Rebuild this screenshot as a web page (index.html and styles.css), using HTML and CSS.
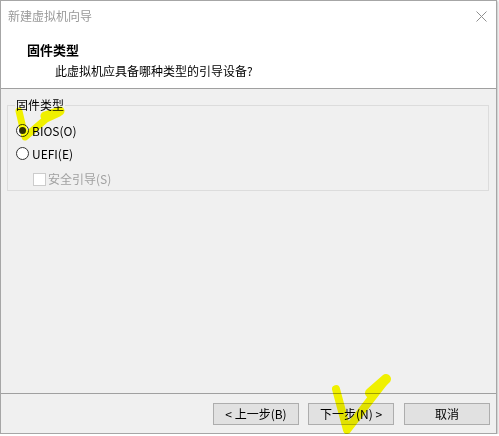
FILE: index.html
```html
<!DOCTYPE html>
<html lang="zh-CN">
<head>
<meta charset="utf-8">
<link rel="stylesheet" href="styles.css">
</head>
<body>
<div class="window">
  <div class="top">
    <div class="titlebar">
      <span class="title">新建虚拟机向导</span>
      <svg class="close" width="11" height="11" viewBox="0 0 11 11"><path d="M0.5 0.5 L10.5 10.5 M10.5 0.5 L0.5 10.5" stroke="#8f8f8f" stroke-width="1" fill="none"/></svg>
    </div>
    <div class="header">
      <div class="h-title">固件类型</div>
      <div class="h-sub">此虚拟机应具备哪种类型的引导设备?</div>
    </div>
  </div>
  <div class="content">
    <div class="group">
      <div class="legend">固件类型</div>
      <div class="row r-bios">
        <span class="radio"><span class="dot"></span></span>
        <span class="lbl">BIOS(O)</span>
      </div>
      <div class="row r-uefi">
        <span class="radio"></span>
        <span class="lbl">UEFI(E)</span>
      </div>
      <div class="row r-check">
        <span class="check"></span>
        <span class="lbl disabled">安全引导(S)</span>
      </div>
    </div>
  </div>
  <div class="footer">
    <button class="btn">&lt; 上一步(B)</button>
    <button class="btn">下一步(N) &gt;</button>
    <button class="btn">取消</button>
  </div>
  <svg class="mark mark1" width="80" height="60" viewBox="0 0 80 60">
    <path d="M19 111 L25 137 L46 119 L59 113" transform="translate(0,-90)" stroke="#ffff00" stroke-width="7" stroke-linecap="round" stroke-linejoin="round" fill="none"/>
    <path d="M45 116 L60 111" transform="translate(0,-90)" stroke="#ffff00" stroke-width="9" stroke-linecap="round" fill="none"/>
  </svg>
  <svg class="mark mark2" width="80" height="64" viewBox="0 0 80 64">
    <path d="M336 389 L347 430 L384 382" transform="translate(-320,-372)" stroke="#ffff00" stroke-width="8" stroke-linecap="round" stroke-linejoin="round" fill="none"/>
    <path d="M370 393 L386 379" transform="translate(-320,-372)" stroke="#ffff00" stroke-width="10" stroke-linecap="round" fill="none"/>
  </svg>
</div>
</body>
</html>
```
FILE: styles.css
```css
* { box-sizing: border-box; }
html, body { margin: 0; padding: 0; background: #ffffff; }
body {
  font-family: "Noto Sans CJK SC", "Noto Sans", sans-serif;
  font-size: 12px;
  line-height: 16px;
  color: #000;
}
.window {
  position: relative;
  width: 497px;
  height: 434px;
  border: 1px solid #a6a6a6;
  background: #f0f0f0;
  display: flex;
  flex-direction: column;
  box-shadow: 1px 1px 2px rgba(0,0,0,0.25);
}
.top {
  background: #ffffff;
  height: 88px;
  border-bottom: 1px solid #a0a0a0;
}
.titlebar {
  height: 30px;
  display: flex;
  align-items: center;
  justify-content: space-between;
  padding: 0 8px 0 7px;
}
.title { color: #999999; }
.close { margin-right: 1px; }
.header { padding: 10px 0 0 26px; }
.h-title { font-weight: bold; font-size: 13px; line-height: 17px; }
.h-sub { padding-left: 28px; margin-top: 4px; line-height: 17px; }
.content {
  flex: 1;
  padding: 16px 7px 0 6px;
}
.group {
  border: 1px solid #dcdcdc;
  height: 86px;
  padding: 0 0 0 8px;
  display: flex;
  flex-direction: column;
  align-items: flex-start;
}
.legend {
  background: #f0f0f0;
  margin: -9px 0 0 -1px;
  padding: 0 1px;
  height: 16px;
}
.row { display: flex; align-items: center; height: 22px; }
.r-bios { margin-top: 7px; }
.r-uefi { margin-top: 1px; }
.r-check { margin-top: 4px; padding-left: 17px; }
.radio {
  width: 13px; height: 13px;
  border: 1px solid #333;
  border-radius: 50%;
  background: #fff;
  display: flex; align-items: center; justify-content: center;
  margin-right: 3px;
}
.dot { width: 7px; height: 7px; border-radius: 50%; background: #333; }
.check {
  width: 13px; height: 13px;
  border: 1px solid #cccccc;
  background: #fff;
  margin-right: 2px;
}
.disabled { color: #a0a0a0; }
.footer {
  height: 40px;
  border-top: 1px solid #a0a0a0;
  display: flex;
  justify-content: flex-end;
  align-items: flex-start;
  padding: 9px 6px 0 0;
  gap: 9px;
}
.btn {
  width: 86px;
  height: 22px;
  border: 1px solid #adadad;
  background: #e1e1e1;
  font: inherit;
  color: #000;
  padding: 0;
  line-height: 18px;
}
.btn + .btn + .btn { margin-left: 1px; }
.mark { position: absolute; pointer-events: none; mix-blend-mode: multiply; }
.mark1 { left: -1px; top: 89px; }
.mark2 { left: 319px; top: 371px; }
```
